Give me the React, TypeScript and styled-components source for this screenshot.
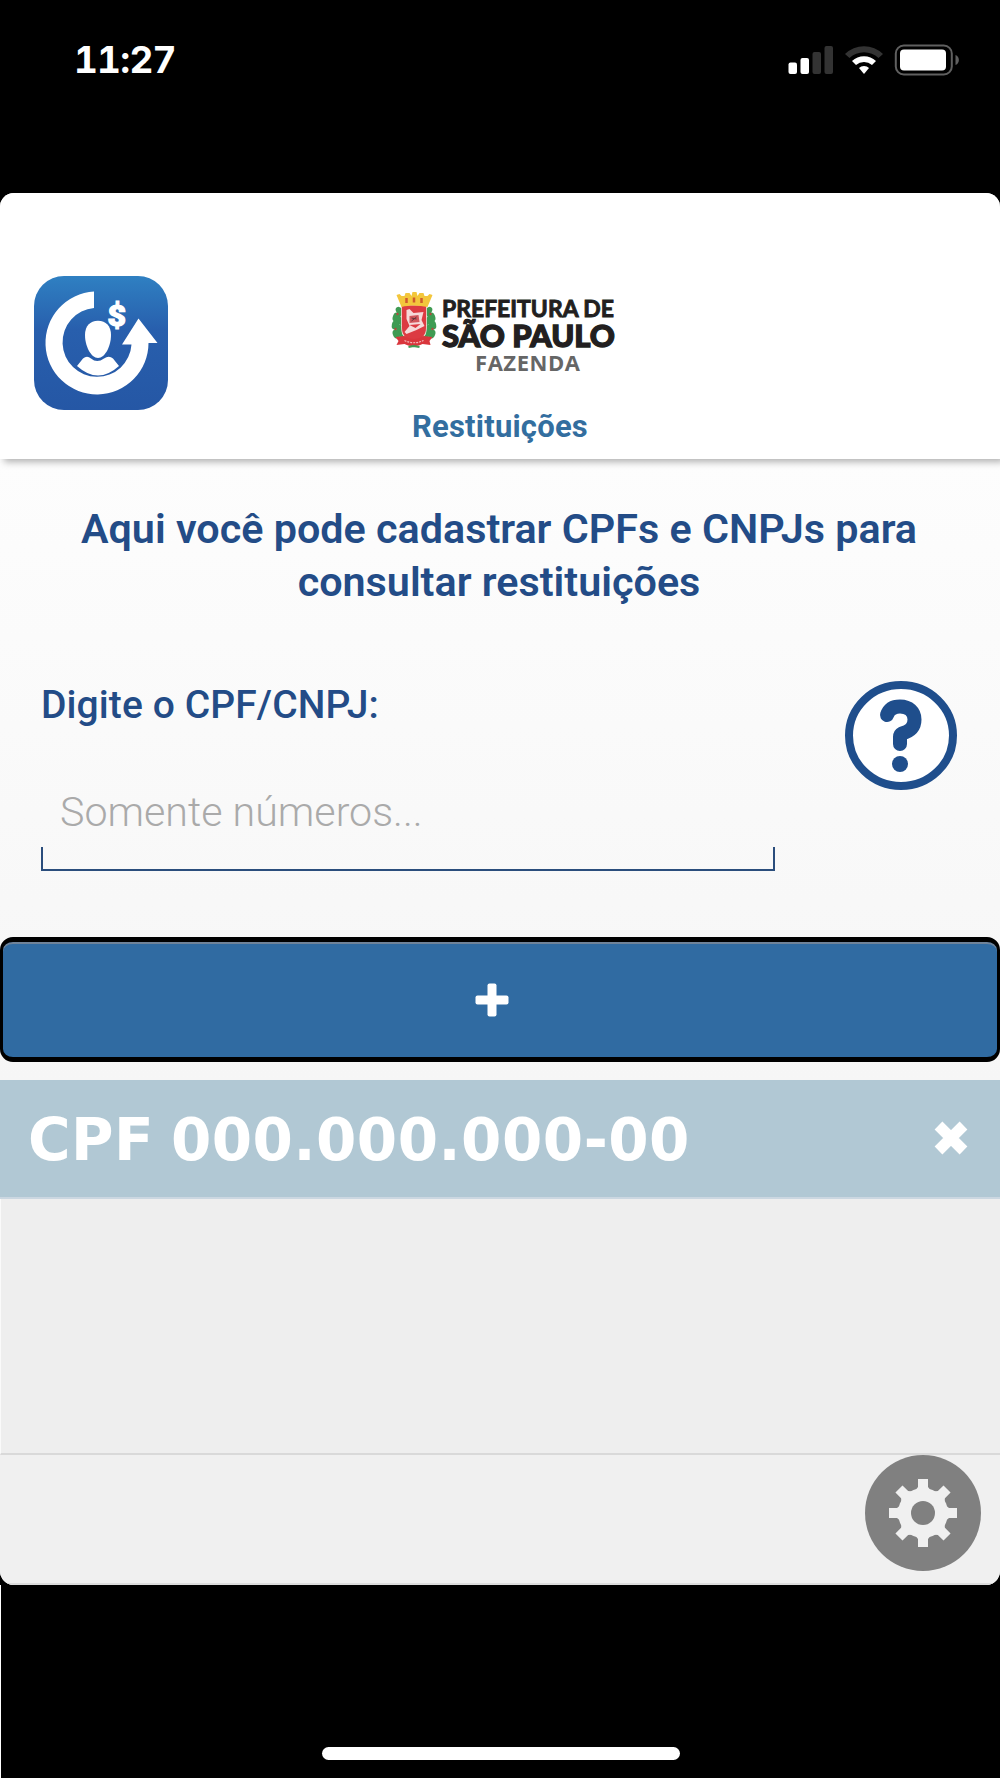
import styled, { createGlobalStyle } from 'styled-components';

const GlobalStyle = createGlobalStyle`
  * {
    box-sizing: border-box;
  }

  body {
    margin: 0;
    background-color: #000;
  }

  h1, h2, p {
    margin: 0;
  }
`;

const Screen = styled.div`
  width: 1000px;
  height: 1778px;

  font-family: Roboto, sans-serif;
  background-color: #000;
  overflow: hidden;

  display: flex;
  flex-direction: column;
`;

const StatusBar = styled.div`
  height: 193px;
  padding: 36px 40px 0 74px;

  color: #fff;

  display: flex;
  justify-content: space-between;
  align-items: flex-start;
`;

const Clock = styled.span`
  font-family: Inter, sans-serif;
  font-size: 37px;
  font-weight: 700;
  font-variant-numeric: tabular-nums;
  line-height: 48px;
  letter-spacing: -0.8px;
`;

const StatusIcons = styled.svg`
  display: block;
  width: 175px;
  height: 48px;
`;

const AppWindow = styled.main`
  height: 1392px;

  background-color: #efefef;
  border-radius: 14px;
  overflow: hidden;

  display: flex;
  flex-direction: column;
`;

const Header = styled.header`
  height: 266px;
  padding: 0 34px;
  flex-shrink: 0;

  background-color: #fff;
  box-shadow: 4px 3px 7px rgba(0, 0, 0, 0.3);
  z-index: 1;

  display: grid;
  grid-template-columns: 134px 1fr 134px;
`;

const AppIcon = styled.svg`
  width: 134px;
  height: 134px;
  margin-top: 83px;
`;

const Brand = styled.div`
  padding-top: 92px;

  display: flex;
  flex-direction: column;
  align-items: center;
`;

const BrandLogo = styled.svg`
  width: 230px;
  height: 92px;
  margin-left: 10px;
`;

const PageName = styled.h1`
  margin-top: 32px;

  color: #336e9f;
  font-size: 31px;
  font-weight: 700;
  line-height: 36px;
  letter-spacing: 0.2px;
`;

const FormArea = styled.section`
  height: 621px;
  flex-shrink: 0;

  color: #234c87;
  background: linear-gradient(#fdfdfd, #f6f6f6);

  display: flex;
  flex-direction: column;
`;

const Intro = styled.h2`
  padding: 44px 42px 0 40px;

  font-size: 41.3px;
  font-weight: 600;
  line-height: 53px;
  text-align: center;
`;

const FieldRow = styled.div`
  height: 190px;
  margin-top: 72px;
  padding: 0 43px 0 41px;

  display: flex;
  justify-content: space-between;
  align-items: flex-start;
`;

const Field = styled.div`
  width: 734px;

  display: flex;
  flex-direction: column;
`;

const Label = styled.label`
  font-size: 39px;
  font-weight: 500;
  line-height: 48px;
  letter-spacing: 0.1px;
`;

const NumberInput = styled.input`
  height: 73px;
  margin-top: 46px;
  padding: 0 19px;

  background: transparent;
  border: none;
  outline: none;

  font-family: Roboto, sans-serif;
  font-size: 41.2px;
  font-weight: 300;

  &::placeholder {
    color: #aaa;
    opacity: 1;
  }
`;

const InputEdge = styled.div`
  height: 24px;
  margin-top: -1px;

  border: 2px solid #2a4d7c;
  border-top: none;
`;

const HelpButton = styled.svg`
  width: 112px;
  height: 110px;
`;

const AddButton = styled.button`
  width: 1000px;
  height: 125px;
  margin-top: 66px;
  padding: 0 17px 0 0;
  flex-shrink: 0;

  background-color: #306ba2;
  border: 4px solid #000;
  border-width: 5px 3px;
  border-radius: 13px;
  box-shadow: inset 0 2px 0 #6f8399;

  display: flex;
  justify-content: center;
  align-items: center;
`;

const Entry = styled.div`
  height: 119px;
  padding: 0 32px 0 28px;
  flex-shrink: 0;

  color: #fff;
  background-color: #b1c8d4;
  border-bottom: 2px solid #cbd7e1;

  display: flex;
  justify-content: space-between;
  align-items: center;
`;

const EntryNumber = styled.span`
  padding-top: 2px;

  font-family: 'DejaVu Sans', sans-serif;
  font-size: 58px;
  font-weight: 700;
  line-height: 70px;
  letter-spacing: 0.5px;
  word-spacing: -4px;
`;

const RemoveIcon = styled.svg`
  width: 34px;
  height: 34px;
  margin-bottom: 2px;
`;

const EmptyList = styled.div`
  height: 256px;
  flex-shrink: 0;

  background-color: #eee;
  border-bottom: 2px solid #d9d9d9;
  border-left: 1px solid #fafafa;
`;

const Footer = styled.footer`
  flex: 1;
  padding-right: 19px;

  background-color: #f0f0f0;
  border-bottom: 2px solid #dcdcdc;

  display: flex;
  justify-content: flex-end;
`;

const SettingsButton = styled.svg`
  width: 116px;
  height: 116px;
`;

const HomeArea = styled.div`
  flex: 1;
  padding-bottom: 18px;

  border-left: 1px solid #fff;

  display: flex;
  justify-content: center;
  align-items: flex-end;
`;

const HomeIndicator = styled.div`
  width: 358px;
  height: 13px;

  background-color: #fff;
  border-radius: 7px;
`;

// leaf positions on the left branch, the right one is mirrored
const leaves = [
  { x: 8, y: 19, turn: -35 },
  { x: 4.5, y: 25, turn: 20 },
  { x: 9, y: 29, turn: -40 },
  { x: 3.5, y: 33, turn: 10 },
  { x: 8.5, y: 37, turn: -30 },
  { x: 4.5, y: 42, turn: -20 },
];

function Branch() {
  return (
    <>
      <path d='M11 17 C4 26 4 38 12 47' fill='none' stroke='#3f9b53' strokeWidth='4' />
      {leaves.map(({ x, y, turn }) => (
        <ellipse
          key={y}
          cx={x}
          cy={y}
          rx='3.2'
          ry='4.6'
          fill='#3f9b53'
          transform={`rotate(${turn} ${x} ${y})`}
        />
      ))}
      <circle cx='6' cy='22' r='1.2' fill='#b5483c' />
      <circle cx='4' cy='37' r='1.2' fill='#b5483c' />
    </>
  );
}

function Crest() {
  return (
    <g>
      <Branch />
      <g transform='translate(45 0) scale(-1 1)'>
        <Branch />
      </g>
      <path
        d='M10 13 H35 V36 C35 44 29 48 22.500 51 C16 48 10 44 10 36 Z'
        fill='#dc3b42'
        stroke='#f1e3d8'
        strokeWidth='0.800'
      />
      <path
        d='M5 3 L8 2 L10 4 L13 4 L14 1 L18 1 L20 4 L21 0 L25 0 L26 4 L28 1 L32 1 L33 4 L36 4 L38 2 L41 3 L36 15 C27 13 18 13 10 15 Z'
        fill='#f3c63c'
      />
      <path d='M15 6 V11 M22.500 5.500 V10.500 M30 6 V11' stroke='#cf5a2c' strokeWidth='2.500' />
      <path d='M15 18 L18 17 L22 21 L32 20 L30 28 L33 34 L25 38 L15 42 L13 40 L18 34 L15 27 Z' fill='#f6d9d9' />
      <path d='M18 24 L27 23 L28 30 L18 31 Z' fill='#d1575c' />
      <path d='M20 26 L25 27 M20 29 L25 25' stroke='#63343a' strokeWidth='1' />
      <path d='M18 33 L29 32 L24 36 Z' fill='#dc3b42' />
      <path d='M4 45 L13 44 C19 48 26 48 32 44 L41 45 L38 49 L39 53 L31 52 C25 55 19 55 13 52 L5 53 L7 49 Z' fill='#d9363c' />
      <path d='M13 48.500 C19 51.500 26 51.500 32 48.500' fill='none' stroke='#f0b9b9' strokeWidth='1.200' strokeDasharray='2 1' />
      <path d='M17 55 L22 54 L28 55' fill='none' stroke='#3f9b53' strokeWidth='2' />
    </g>
  );
}

export default function App() {
  return (
    <Screen>
      <GlobalStyle />
      <StatusBar>
        <Clock>11:27</Clock>
        <StatusIcons viewBox='785 36 175 48'>
          <rect x='788.500' y='62.500' width='8.500' height='11.500' rx='2' fill='#fff' />
          <rect x='800.500' y='58' width='8.500' height='16' rx='2' fill='#fff' />
          <rect x='812.500' y='52' width='8.500' height='22' rx='2' fill='#333' />
          <rect x='824.500' y='46' width='8.500' height='28' rx='2' fill='#333' />
          <path d='M845 54 A27 27 0 0 1 883 54 L878.500 58 A21 21 0 0 0 849.500 58 Z' fill='#333' />
          <path d='M852 61 A17.500 17.500 0 0 1 876 61 L872 65 A12 12 0 0 0 856 65 Z' fill='#fff' />
          <path d='M859 68 A7 7 0 0 1 869 68 L864 74 Z' fill='#fff' />
          <rect x='895.800' y='45.500' width='56' height='29' rx='8' fill='none' stroke='#606060' strokeWidth='2' />
          <rect x='900' y='49.500' width='46' height='21' rx='4' fill='#fff' />
          <path d='M955.500 55 C960 56.500 960 63.500 955.500 65 Z' fill='#606060' />
        </StatusIcons>
      </StatusBar>

      <AppWindow>
        <Header>
          <AppIcon viewBox='34 276 134 134'>
            <defs>
              <linearGradient id='iconFill' x1='0' y1='0' x2='0' y2='1'>
                <stop offset='0' stopColor='#2f80c2' />
                <stop offset='0.4' stopColor='#285fad' />
                <stop offset='1' stopColor='#2557a5' />
              </linearGradient>
            </defs>
            <rect x='34' y='276' width='134' height='134' rx='30' fill='url(#iconFill)' />
            <path
              d='M94 291.500 A51.500 51.500 0 1 0 148.500 343 H157.500 L138.500 318.500 L122 344.500 H131.500 A34.500 34.500 0 1 1 94 308 Z'
              fill='#fff'
            />
            <path
              d='M77 366 L83 358.500 Q87 355 91 358.500 Q97 363.500 104 358.500 Q109 355 113 358.500 L119 366 Q98 385 77 366 Z'
              fill='#fff'
            />
            <path
              d='M98 320.700 C106 320.700 111 326 111 335 C111 346 105 358 98 358 C91 358 85 346 85 335 C85 326 90 320.700 98 320.700 Z'
              fill='#fff'
            />
            <text
              x='107.500'
              y='326'
              textLength='18.500'
              lengthAdjust='spacingAndGlyphs'
              fontFamily='Roboto, sans-serif'
              fontSize='29'
              fontWeight='900'
              fill='#fff'
              stroke='#fff'
              strokeWidth='1.200'
            >
              $
            </text>
          </AppIcon>

          <Brand>
            <BrandLogo viewBox='390 285 230 92'>
              <g transform='translate(391.500 292)'>
                <Crest />
              </g>
              <text
                x='442'
                y='316.500'
                textLength='172'
                lengthAdjust='spacingAndGlyphs'
                fontFamily='Lato, sans-serif'
                fontSize='23'
                fontWeight='700'
                fill='#221f20'
                stroke='#221f20'
                strokeWidth='0.900'
              >
                PREFEITURA DE
              </text>
              <text
                x='442'
                y='347'
                textLength='173'
                lengthAdjust='spacingAndGlyphs'
                fontFamily='Lato, sans-serif'
                fontSize='30'
                fontWeight='900'
                fill='#221f20'
                stroke='#221f20'
                strokeWidth='1.300'
              >
                SÃO PAULO
              </text>
              <text
                x='475'
                y='370.500'
                textLength='105'
                fontFamily='Open Sans, sans-serif'
                fontSize='22'
                fontWeight='700'
                fill='#666'
              >
                FAZENDA
              </text>
            </BrandLogo>
            <PageName>Restituições</PageName>
          </Brand>
        </Header>

        <FormArea>
          <Intro>
            Aqui você pode cadastrar CPFs e CNPJs para
            <br />
            consultar restituições
          </Intro>
          <FieldRow>
            <Field>
              <Label htmlFor='document'>Digite o CPF/CNPJ:</Label>
              <NumberInput id='document' placeholder='Somente números...' />
              <InputEdge />
            </Field>
            <HelpButton viewBox='845 681 112 110'>
              <ellipse cx='901' cy='735.500' rx='52' ry='50.500' fill='#fff' stroke='#1f4e8c' strokeWidth='8' />
              <path
                d='M887 715 C889 709 894 706.500 900 706.500 C909 706.500 914.500 712 914.500 719.500 C914.500 728 909 731.500 902 733.500 Q900 734.500 900 737 V744'
                fill='none'
                stroke='#1f4e8c'
                strokeWidth='14'
                strokeLinecap='round'
                strokeLinejoin='round'
              />
              <circle cx='900' cy='764' r='8' fill='#1f4e8c' />
            </HelpButton>
          </FieldRow>
          <AddButton aria-label='Adicionar'>
            <svg width='34' height='34' viewBox='0 0 34 34'>
              <rect x='0.500' y='12.500' width='33' height='9' rx='2' fill='#fff' />
              <rect x='12.500' y='0.500' width='9' height='33' rx='2' fill='#fff' />
            </svg>
          </AddButton>
        </FormArea>

        <Entry>
          <EntryNumber>CPF 000.000.000-00</EntryNumber>
          <RemoveIcon viewBox='0 0 34 34'>
            <path d='M4.500 4.500 L29.500 29.500 M29.500 4.500 L4.500 29.500' stroke='#fff' strokeWidth='11' />
          </RemoveIcon>
        </Entry>
        <EmptyList />
        <Footer>
          <SettingsButton viewBox='-58 -58 116 116'>
            <circle r='58' fill='#808080' />
            <circle r='25' fill='#f0f0f0' />
            {[0, 45, 90, 135].map((angle) => (
              <path
                key={angle}
                d='M-5 -34 H5 V-26 L9 -21 V21 L5 26 V34 H-5 V26 L-9 21 V-21 L-5 -26 Z'
                fill='#f0f0f0'
                transform={`rotate(${angle})`}
              />
            ))}
            <circle r='12' fill='#808080' />
          </SettingsButton>
        </Footer>
      </AppWindow>

      <HomeArea>
        <HomeIndicator />
      </HomeArea>
    </Screen>
  );
}
